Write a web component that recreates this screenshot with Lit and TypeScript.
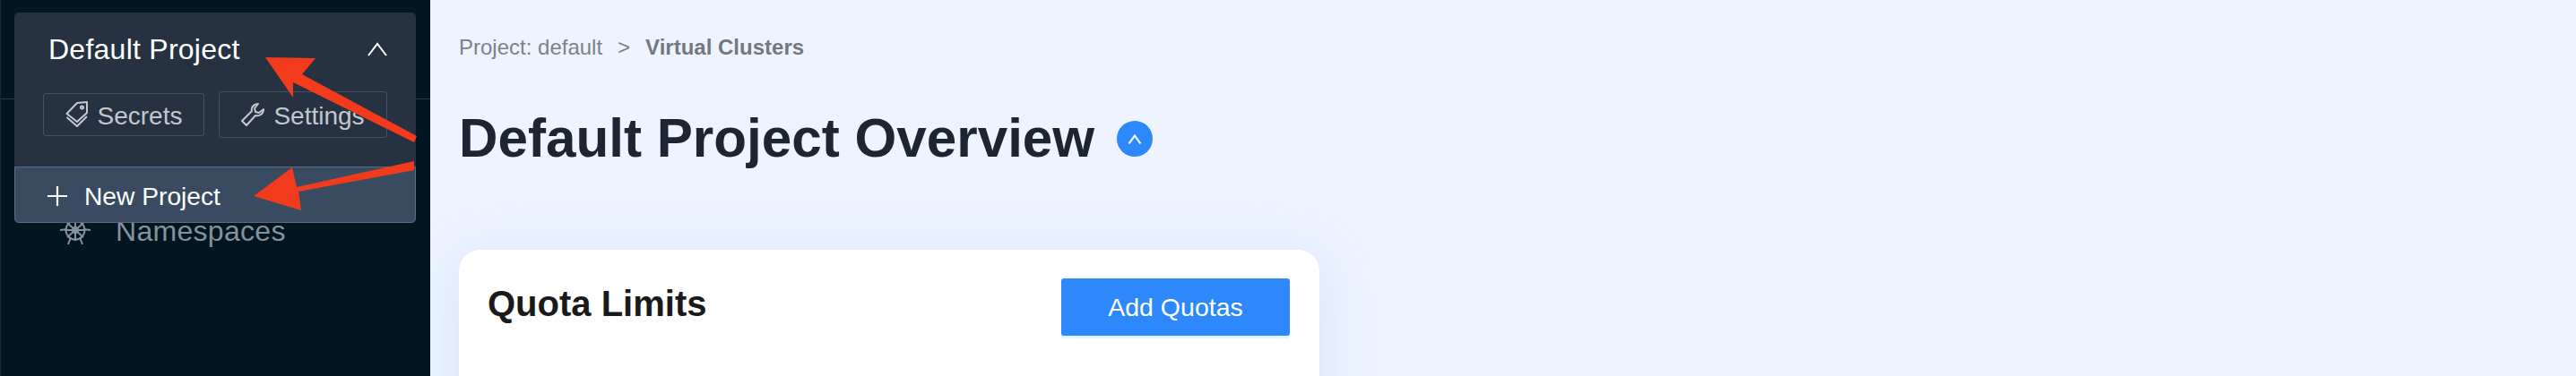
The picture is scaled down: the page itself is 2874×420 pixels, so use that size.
import { LitElement, html, css } from "lit";
import { customElement } from "lit/decorators.js";

@customElement("app-root")
export class AppRoot extends LitElement {
  static styles = css`
    :host { display: block; width: 2874px; height: 420px; overflow: hidden; font-family: "Liberation Sans", Arial, sans-serif; }
    .page { position: relative; display: flex; width: 2874px; height: 420px; background: #edf4ff; overflow: hidden; }
    .side { position: relative; flex: 0 0 480px; height: 420px; background: #011522; box-sizing: border-box; border-left: 1px solid #17293a; }
    .hr { position: absolute; left: 0; right: 0; top: 110px; height: 1px; background: #2b3b4b; }
    .ns { position: absolute; left: 66px; top: 238px; display: flex; align-items: center; gap: 28px; color: #87919b; font-size: 32px; line-height: 40px; letter-spacing: .3px; }
    .panel { position: absolute; left: 15px; top: 14px; width: 448px; height: 235px; background: #263242; border-radius: 5px; display: flex; flex-direction: column; box-sizing: border-box; }
    .phead { display: flex; justify-content: space-between; align-items: center; height: 70px; margin-top: 6px; padding: 0 32px 0 38px; color: #fff; font-size: 32px; letter-spacing: .25px; }
    .btns { display: flex; gap: 16px; padding: 0 32px; margin-top: 12px; align-items: center; }
    .btn { box-sizing: border-box; display: flex; align-items: center; justify-content: center; gap: 10px; height: 48px; border: 1.5px solid #435263; border-radius: 3px; color: #c3c8ce; font-size: 28px; }
    .btn span { padding-top: 4px; }
    .b1 { width: 180px; }
    .b2 { width: 188px; height: 52px; }
    .newp { position: absolute; left: 0; right: 0; bottom: 0; height: 63px; box-sizing: border-box; background: #384b60; border: 1.5px solid #5b6c7f; border-radius: 0 0 5px 5px; display: flex; align-items: center; gap: 19px; padding: 3px 0 0 36px; color: #fff; font-size: 28.200px; }
    .main { flex: 1; box-sizing: border-box; padding: 38px 32px 0; background: #edf4ff; }
    .crumb { display: flex; align-items: center; font-size: 24px; line-height: 30px; color: #7d8288; }
    .sep { margin: 0 17px; }
    .crumb b { color: #74787e; }
    .title { display: flex; align-items: center; gap: 25px; margin-top: 50px; height: 74px; }
    h1 { margin: 0; font-size: 60.200px; line-height: 74px; font-weight: 700; color: #1c2530; }
    .circ { width: 40px; height: 40px; border-radius: 50%; background: #2c88fb; display: flex; align-items: center; justify-content: center; }
    .card { box-sizing: border-box; margin-top: 87px; width: 960px; height: 220px; background: #fff; border-radius: 24px; box-shadow: 0 10px 60px rgba(150,175,235,.26); padding: 32px 33px 0 32px; display: flex; justify-content: space-between; align-items: flex-start; }
    h2 { margin: 6px 0 0; font-size: 40px; line-height: 44px; font-weight: 700; color: #1a1a1a; }
    .add { box-sizing: border-box; width: 255px; height: 64px; background: #2c88fb; color: #fff; border-radius: 3px; box-shadow: 0 3px 0 #e3f3ff; display: flex; align-items: center; justify-content: center; font-size: 28.500px; }
    .arrows { position: absolute; left: 0; top: 0; pointer-events: none; }
  `;

  render() {
    return html`<div class="page">
      <div class="side">
        <div class="hr"></div>
        <div class="ns">
          <svg width="34" height="34" viewBox="0 0 34 34" fill="none" stroke="#87919b" stroke-width="2">
            <circle cx="17" cy="16" r="10.5"/><circle cx="17" cy="16" r="3"/>
            <path d="M0 16l8 -1M34 16l-8 -1M9 32l3-8M25 32l-3-8M8 8l18 16M26 8L8 24M17 4v24M6 16h22"/>
          </svg>
          <span>Namespaces</span>
        </div>
        <div class="panel">
          <div class="phead"><span>Default Project</span>
            <svg width="22" height="16" viewBox="0 0 22 16" fill="none" stroke="#fff" stroke-width="2"><path d="M1 15L11 2l10 13"/></svg>
          </div>
          <div class="btns">
            <div class="btn b1">
              <svg width="26" height="30" viewBox="0 0 26 30" fill="none" stroke="#c3c8ce" stroke-width="2" stroke-linejoin="round"><path d="M1.500 14L13 2l11-1v12L13 23 1.500 14zM1.500 18L13 28l11-11"/><circle cx="18.500" cy="7" r="1.500"/></svg>
              <span>Secrets</span>
            </div>
            <div class="btn b2">
              <svg width="26" height="26" viewBox="0 0 26 26" fill="none" stroke="#c3c8ce" stroke-width="2" stroke-linejoin="round"><path d="M1 20L12 9c-1-4 2-8 7-8l-4 5 1 4 4 1 5-4c0 5-4 8-9 7L6 25z"/></svg>
              <span>Settings</span>
            </div>
          </div>
          <div class="newp">
            <svg width="22" height="22" viewBox="0 0 22 22" stroke="#fff" stroke-width="2.200"><path d="M11 0v22M0 11h22"/></svg>
            <span>New Project</span>
          </div>
        </div>
      </div>
      <div class="main">
        <div class="crumb"><span>Project: default</span><span class="sep">&gt;</span><b>Virtual Clusters</b></div>
        <div class="title"><h1>Default Project Overview</h1>
          <div class="circ"><svg width="16" height="11" viewBox="0 0 16 11" fill="none" stroke="#edf4ff" stroke-width="2.200"><path d="M1.500 10.500L8 1.500l6.500 9"/></svg></div>
        </div>
        <div class="card"><h2>Quota Limits</h2><div class="add">Add Quotas</div></div>
      </div>
      <svg class="arrows" width="480" height="420" viewBox="0 0 480 420" fill="#f13b1c">
        <path d="M296 64L352 65 337 83 465 152 462 159 327 92 327 109z"/>
        <path d="M283 219L326 187 331 209 462 180 462 190 333 214 336 235z"/>
      </svg>
    </div>`;
  }
}
